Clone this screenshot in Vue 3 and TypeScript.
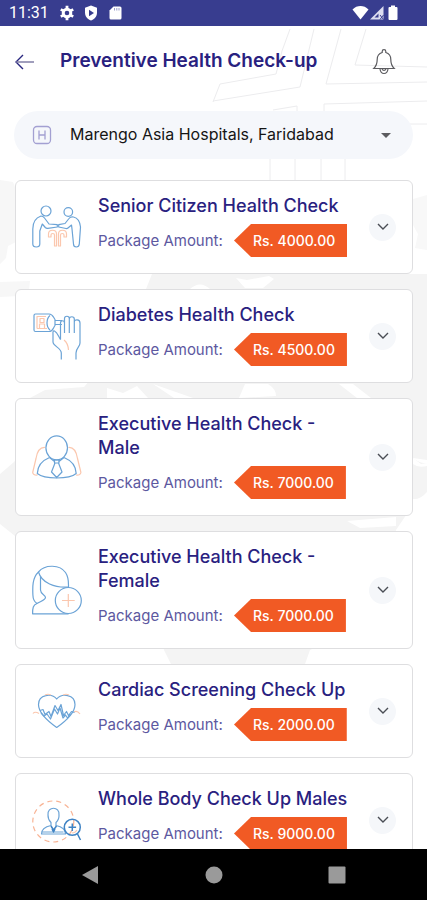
<script setup lang="ts">
import { ref } from 'vue'

type IconName = 'senior' | 'diabetes' | 'male' | 'female' | 'cardiac' | 'body'

interface HealthPackage {
  title: string
  amount: number
  icon: IconName
}

const hospitals: string[] = ['Marengo Asia Hospitals, Faridabad']
const hospital = ref<string>(hospitals[0])

const packages: HealthPackage[] = [
  { title: 'Senior Citizen Health Check', amount: 4000, icon: 'senior' },
  { title: 'Diabetes Health Check', amount: 4500, icon: 'diabetes' },
  { title: 'Executive Health Check - Male', amount: 7000, icon: 'male' },
  { title: 'Executive Health Check - Female', amount: 7000, icon: 'female' },
  { title: 'Cardiac Screening Check Up', amount: 2000, icon: 'cardiac' },
  { title: 'Whole Body Check Up Males', amount: 9000, icon: 'body' },
]

const formatAmount = (value: number): string => `Rs. ${value.toFixed(2)}`
</script>

<template>
  <div class="screen">
    <div class="status">
      <div class="status-group">
        <span class="clock">11:31</span>
        <svg width="16" height="16" viewBox="0 0 16 16" aria-hidden="true">
          <circle cx="8" cy="8" r="3.8" fill="none" stroke="#fff" stroke-width="3" />
          <path d="M8 .8v3M8 12.200v3M1.800 4.400l2.600 1.500M11.600 10.100l2.600 1.500M1.800 11.600l2.600-1.500M11.600 5.900l2.600-1.500" stroke="#fff" stroke-width="2.800" />
        </svg>
        <svg width="16" height="16" viewBox="0 0 16 16" aria-hidden="true">
          <path d="M8 .5l6 2.300v4.700c0 3.800-2.500 6.800-6 8-3.500-1.200-6-4.200-6-8V2.800z" fill="#fff" />
          <path d="M6 4.800l5 3.200-5 3.200z" fill="#383d8f" />
        </svg>
        <svg width="16" height="16" viewBox="0 0 16 16" aria-hidden="true">
          <path d="M6.500 1.500H13a1.500 1.500 0 0 1 1.500 1.500v10a1.500 1.500 0 0 1-1.500 1.500H4A1.500 1.500 0 0 1 2.500 13V5.500z" fill="#fff" />
          <path d="M7.500 3v2.500M9.800 3v2.500M12 3v2.500" stroke="#9b9ecb" stroke-width="1" />
        </svg>
      </div>
      <div class="status-icons">
        <svg width="17" height="16" viewBox="0 0 17 16" aria-hidden="true">
          <path d="M.5 4.500C5-.1 12-.1 16.500 4.500L8.500 14.500z" fill="#fff" />
        </svg>
        <svg width="16" height="16" viewBox="0 0 16 16" aria-hidden="true">
          <path d="M1 14.500L14.500 1v13.500z" fill="#dcddf0" />
          <path d="M5.500 12.500L9.500 8.500v4z" fill="#383d8f" />
          <path d="M11 10l3.500 4.500M14.500 10L11 14.500" stroke="#383d8f" />
        </svg>
        <svg width="16" height="16" viewBox="0 0 16 16" aria-hidden="true">
          <path d="M6 .5h4V2h1.500A1 1 0 0 1 12.500 3v11a1 1 0 0 1-1 1h-7a1 1 0 0 1-1-1V3a1 1 0 0 1 1-1H6z" fill="#fff" />
        </svg>
      </div>
    </div>

    <main class="content">
      <svg class="backdrop" viewBox="0 26 427 823" preserveAspectRatio="xMidYMin slice" aria-hidden="true">
        <g fill="#f4f4f4">
          <path d="M0 180L13 182 20 200V240L8 246 6 258 0 264z" fill="#f7f7f7" />
          <path d="M0 282L30 281 29 290 20 296 0 297z" fill="#f7f7f7" />
          <path d="M152 274H427V460L413 458V505L396 530V600L330 640 310 650 305 664H171L164 650 140 570 90 540 15 536 0 524V474L14 462 30 440V398L45 390 84 387 90 380 120 340 146 289z" />
          <path d="M413 199L427 195V250L415 248 418 234 413 225z" fill="#f8f8f8" />
          <path d="M413 458Q420 464 427 463V492Q420 500 413 499z" />
        </g>
        <g fill="#fff">
          <path d="M190 289Q200 280 210 289z" />
          <path d="M236 278L247 280 269 276 274 279 263 288H245z" />
          <path d="M107 388L123 393 137 386 148 398H107z" />
          <path d="M153 384L193 398H174z" />
          <path d="M245 384H268Q276 389 276 396L239 398z" />
          <path d="M339 384H353L371 398H357z" />
          <path d="M347 521L396 517V526L360 528z" />
          <path d="M413 458L421 464 427 463V466Q418 468 413 464z" />
        </g>
        <g fill="none" stroke="#ececee" stroke-width="1">
          <path d="M290 29l-8 22-6 23-56 10-7 18" />
          <path d="M314 29l-14 58-87 14" />
          <path d="M341 29l-15 55 101-2M366 29l-11 36 72 2M324 114v-10l103-3M273 110l24-4v26M410 124h17" />
          <path d="M270 158v22M295 158v22M321 158v22M345 158v22" />
        </g>
      </svg>

      <header class="header">
        <button class="icon-button" type="button" aria-label="Back">
          <svg width="20" height="18" viewBox="0 0 20 18" aria-hidden="true">
            <path d="M8 2L1 9l7 7" fill="none" stroke="#29277f" stroke-width="1.400" />
            <path d="M1 9h18" stroke="#77759f" stroke-width="1.400" />
          </svg>
        </button>
        <h1>Preventive Health Check-up</h1>
        <button class="icon-button bell" type="button" aria-label="Notifications">
          <svg width="24" height="26" viewBox="0 0 24 26" fill="none" stroke="#5c5c60" stroke-width="1.200" aria-hidden="true">
            <path d="M10.200 3.500V2.500a1.800 1.800 0 0 1 3.600 0v1c3.400 1 5 4 5 7 0 4.500.8 6.500 3.400 9H1.800c2.600-2.500 3.400-4.500 3.400-9 0-3 1.600-6 5-7z" />
            <path d="M8 20c.4 2.800 1.900 4.500 4 4.500s3.600-1.700 4-4.500M10 20a2.200 2.200 0 0 0 4 0" />
          </svg>
        </button>
      </header>

      <div class="picker">
        <svg width="20" height="20" viewBox="0 0 20 20" fill="none" stroke="#a3a0d2" stroke-width="1.300" aria-hidden="true">
          <rect x="1.500" y="1.500" width="17" height="17" rx="3.500" />
          <path d="M7 5.500v9M13 5.500v9M7 10h6" />
        </svg>
        <select v-model="hospital" aria-label="Hospital">
          <option v-for="name in hospitals" :key="name" :value="name">{{ name }}</option>
        </select>
        <span class="caret" aria-hidden="true"></span>
      </div>

      <ul class="list">
        <li v-for="item in packages" :key="item.title" class="card">
          <svg class="picture" viewBox="0 0 50 50" aria-hidden="true">
            <g v-if="item.icon === 'senior'">
              <circle cx="14" cy="9" r="5" />
              <circle cx="36.300" cy="10" r="4.300" />
              <path d="M9 14C3 16 .8 21 .8 27v15c0 4 7 4 7 0V29l2.500-7 3 3.500q1 1 2.500.8l9.500-1.300v-2.300L17 22l-4.500-6q-1.500-2-3.500-2z" />
              <path d="M41.500 15c4.500 1 6.500 5 7 10l-1.200 17c-.3 4-5.800 4-5.800 0L40 27l-.5-4-3.500 3q-.8.700-2 .5L26.700 25v-2.300l6.300-1.200 4-5q1.500-2 4.500-1.500z" />
              <path class="accent" d="M16.500 35v-3c0-5 8-5 8 0v12h-2V33c0-2-3.500-2-3.500 0v2zM34.500 35v-3c0-5-8-5-8 0v12h2V33c0-2 3.500-2 3.500 0v2z" />
            </g>
            <g v-else-if="item.icon === 'diabetes'">
              <path d="M3.500 3H17c4 0 4 3 6 5.500v6C21 17 21 20.500 17 20.500H3.500q-1.500 0-1.500-1.500V4.500Q2 3 3.500 3z" />
              <path d="M18 4.500c-4 3.500-4 11 0 14.500M23 9.500h7M23 13.500h7" />
              <path class="accent" d="M5 17.500v-12h9M5 17.500h10M7.500 17v-4h5v4M8 7.500h4v4H8z" />
              <path d="M28.500 28.500V12c0-3 4-3 4 0M32.500 22V7.500c0-3 4.800-3 4.800 0V22M37.300 8c0-3 5-3 5 0v14M42.300 11c0-3 5.700-3 5.700 1v20c0 4-4 5-4 10v6.500" />
              <path d="M28.500 28.500c-2-3-3-7-6-8.500-2-.5-1.500 2-1.500 4v7c0 4 8.300 6 8.300 11v6.500" />
              <path class="accent" d="M32 29q4 3 4.500 10" />
            </g>
            <g v-else-if="item.icon === 'male'">
              <path class="accent" d="M13 15.500c-6-.5-8 5-9 11L.8 40c-.5 2 2 3.500 4.700 3M36.500 15.500c6-.5 8 5 9 11L48.800 40c.5 2-2 3.500-4.700 3" />
              <ellipse cx="24.700" cy="15.800" rx="10.800" ry="12" />
              <path d="M17.500 25.500C9 29 5.500 35 5.300 41.500 9 44.500 16 46 24.700 46s16-1.500 19.500-4.500C44 35 40.500 29 32 25.500" />
              <path d="M22.500 28h4.400v3h-4.400zM23 31l-3.500 9L24.700 45.500 30 40l-3.500-9M17.500 25.500l5 4M32 25.500l-5 4" />
            </g>
            <g v-else-if="item.icon === 'female'">
              <path d="M6.500 7C13-1 28-.5 33.500 7.500c3.500 5 3 10 3 14.500C23 23 9.500 18 6.500 7z" />
              <path d="M6.500 7C0 13 .6 23 .9 30c.1 4 1.600 7 4.100 8.500M8.500 12v13c0 4 5 5 5 7.500S8 36.500 5 38.500C1 40 .6 43 .6 48.800h36" />
              <circle cx="36.300" cy="35.500" r="13" />
              <path class="accent" d="M36.300 29v13M30 35.500h12.700" />
            </g>
            <g v-else-if="item.icon === 'cardiac'">
              <path d="M24.700 41.500C17 36 6.500 28 6.500 18.500 6.500 8 20 7 24.700 13 29.500 7 43 8 43 18.500 43 28 32.500 36 24.700 41.500z" />
              <path class="accent" d="M1 27.500q2-2.500 6 0M42 26q3-2 6 2M13 9q3-1.500 6 0M31 9q3-1.500 6 0" />
              <path d="M8 24.500l3-1 2 5 4-3 2 5 4-11 3 5 3-6 2.500 11 3-4 2 4 3-4 3 1M9 27l3 3 3-2 3.500 5 4-10 3 5 2.500-6 3 10 2.500-3 2 3 3-4" />
            </g>
            <g v-else>
              <circle class="accent dashes" cx="21.300" cy="26.500" r="20.500" />
              <path d="M16 20c-1-9 12-9 11 0 .3 4-1.500 6-3 7.500v3c5 1 9.500 3 9.500 8.500H9.500C9.500 33.500 14 31.500 19 30.500v-3c-1.500-1.500-3.200-3.500-3-7.500zM9.500 37h22" />
              <path d="M19 31l2.500 4 3-4M20 34l1.500 3 1.500-3" class="strong" />
              <circle class="strong" cx="40.300" cy="32.300" r="8" />
              <path d="M40.300 28.500v7.600M36.500 32.300h7.600M45.500 39l3 6" class="strong" />
              <path class="accent" d="M45 35q-2 3-5 3" />
            </g>
          </svg>
          <div class="details">
            <h2>{{ item.title }}</h2>
            <p class="amount">
              <span class="amount-label">Package Amount:</span>
              <span class="tag">{{ formatAmount(item.amount) }}</span>
            </p>
          </div>
          <button class="toggle" type="button" :aria-label="`Show ${item.title}`">
            <svg width="12" height="8" viewBox="0 0 12 8" aria-hidden="true">
              <path d="M1 1l5 5 5-5" fill="none" stroke="#4a4d55" stroke-width="1.400" />
            </svg>
          </button>
        </li>
      </ul>
    </main>

    <nav class="system-nav" aria-label="System">
      <button type="button" aria-label="System back">
        <svg width="18" height="18" viewBox="0 0 18 18" aria-hidden="true"><path d="M1 9L17 0v18z" fill="#9a9a9a" /></svg>
      </button>
      <button type="button" aria-label="Home">
        <svg width="18" height="18" viewBox="0 0 18 18" aria-hidden="true"><circle cx="9" cy="9" r="8.500" fill="#9a9a9a" /></svg>
      </button>
      <button type="button" aria-label="Recent apps">
        <svg width="18" height="18" viewBox="0 0 18 18" aria-hidden="true"><rect x=".5" y=".5" width="17" height="17" rx="1" fill="#9a9a9a" /></svg>
      </button>
    </nav>
  </div>
</template>

<style>
body {
  margin: 0;
}
</style>

<style scoped>
.screen {
  display: flex;
  flex-direction: column;
  height: 100vh;
  overflow: hidden;
  background: #fff;
  color: #29217f;
  font-family: Inter, "Open Sans", sans-serif;
}

button {
  display: flex;
  align-items: center;
  justify-content: center;
  padding: 0;
  border: 0;
  background: none;
  cursor: pointer;
}

svg {
  display: block;
  flex: none;
}

.status {
  display: flex;
  flex: none;
  align-items: center;
  justify-content: space-between;
  height: 26px;
  padding: 0 26px 0 9px;
  background: #383d8f;
  color: #fff;
}

.status-group {
  display: flex;
  align-items: center;
  gap: 8px;
}

.clock {
  margin-right: 2px;
  font-family: Roboto, sans-serif;
  font-size: 16px;
  line-height: 28px;
}

.status-icons {
  display: flex;
  align-items: center;
}

.content {
  position: relative;
  flex: 1;
  min-height: 0;
  overflow: hidden;
}

.backdrop {
  position: absolute;
  inset: 0;
  width: 100%;
  height: 100%;
}

.header {
  position: relative;
  display: flex;
  align-items: center;
  height: 72px;
  padding: 0 31px 0 15px;
}

h1 {
  flex: 1;
  margin: 0 0 2px 25px;
  font-size: 19px;
  font-weight: 600;
  line-height: 28px;
}

.icon-button {
  width: 20px;
  height: 28px;
}

.bell {
  width: 24px;
}

.picker {
  position: relative;
  display: flex;
  align-items: center;
  height: 48px;
  margin: 13px 14px 21px;
  border-radius: 24px;
  background: #f5f7fb;
}

.picker svg {
  margin-left: 18px;
}

.picker select {
  flex: 1;
  min-width: 0;
  height: 46px;
  margin: 0 0 2px 18px;
  padding: 0;
  border: 0;
  appearance: none;
  background: transparent;
  color: #151515;
  font-family: inherit;
  font-size: 16px;
}

.caret {
  margin-right: 22px;
  border: 5px solid transparent;
  border-top-color: #5c5c60;
  border-bottom: 0;
}

.list {
  position: relative;
  display: flex;
  flex-direction: column;
  gap: 15px;
  margin: 0;
  padding: 0 14px 15px 15px;
  list-style: none;
}

.card {
  display: flex;
  align-items: center;
  padding: 0 16px;
  border: 1px solid #dedee0;
  border-radius: 6px;
  background: #fff;
}

.picture {
  width: 50px;
  height: 50px;
  fill: none;
  stroke: #6ba3d6;
  stroke-width: 1.2;
  stroke-linejoin: round;
}

.picture .accent {
  stroke: #fbc7ae;
}

.picture .strong {
  stroke: #3f83c4;
  stroke-width: 1.5;
}

.picture .dashes {
  stroke: #f8b394;
  stroke-dasharray: 5 4;
}

.details {
  flex: 1;
  min-width: 0;
  padding: 13px 16px 16px;
}

h2 {
  margin: 0;
  font-size: 18px;
  font-weight: 500;
  line-height: 24px;
}

.amount {
  display: flex;
  align-items: center;
  margin: 6px 0 0;
}

.amount-label {
  width: 136px;
  color: #5d589f;
  font-size: 15px;
  line-height: 20px;
  white-space: nowrap;
}

.tag {
  padding: 0 12px 0 19px;
  background: #f15a24;
  clip-path: polygon(0 50%, 17px 0, 100% 0, 100% 100%, 17px 100%);
  color: #fff;
  font-size: 14px;
  font-weight: 500;
  line-height: 33px;
  white-space: nowrap;
}

.toggle {
  flex: none;
  width: 27px;
  height: 27px;
  border-radius: 50%;
  background: #f5f7fa;
}

.system-nav {
  display: flex;
  flex: none;
  align-items: center;
  justify-content: space-between;
  height: 51px;
  padding: 0 81px;
  background: #000;
}
</style>
